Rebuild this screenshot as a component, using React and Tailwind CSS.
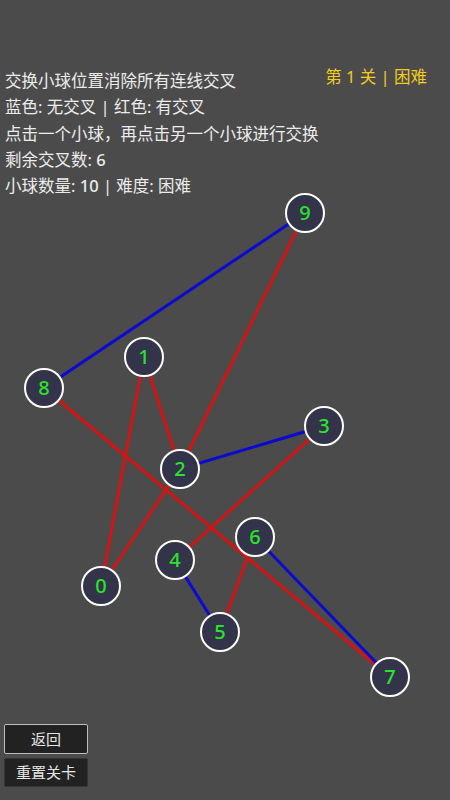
import React from "react";

const NODES = [
  { id: 0, x: 101, y: 586 },
  { id: 1, x: 144, y: 357 },
  { id: 2, x: 180, y: 469 },
  { id: 3, x: 324, y: 426 },
  { id: 4, x: 175, y: 560 },
  { id: 5, x: 220, y: 632 },
  { id: 6, x: 255, y: 537 },
  { id: 7, x: 390, y: 677 },
  { id: 8, x: 44, y: 388 },
  { id: 9, x: 305, y: 213 },
];

// [from, to, crossing]
const EDGES = [
  [9, 8, false],
  [9, 2, true],
  [1, 2, true],
  [1, 0, true],
  [8, 7, true],
  [2, 3, false],
  [2, 0, true],
  [3, 4, true],
  [6, 5, true],
  [6, 7, false],
  [4, 5, false],
];

const font = { fontFamily: '"Noto Sans", "Noto Sans CJK SC", sans-serif' };

export default function App() {
  return (
    <div className="relative w-[450px] h-[800px] bg-[#4b4b4b] overflow-hidden text-[#ececec]" style={font}>
      <div className="pt-[68px] pl-[5px] flex flex-col text-[16.5px] leading-[26.3px]">
        <span>交换小球位置消除所有连线交叉</span>
        <span>蓝色: 无交叉 | 红色: 有交叉</span>
        <span>点击一个小球，再点击另一个小球进行交换</span>
        <span>剩余交叉数: <span className="font-medium">6</span></span>
        <span>小球数量: <span className="font-medium">10</span> | 难度: 困难</span>
      </div>
      <div className="absolute top-[64px] right-[23px] text-[16.5px] leading-[26px] text-[#f2cc1f]">
        第 1 关 | 困难
      </div>

      <svg className="absolute inset-0" width="450" height="800">
        {EDGES.map(([a, b, bad]) => (
          <line
            key={`${a}-${b}`}
            x1={NODES[a].x}
            y1={NODES[a].y}
            x2={NODES[b].x}
            y2={NODES[b].y}
            stroke={bad ? "#d41414" : "#0a0ad2"}
            strokeWidth="3"
          />
        ))}
        {NODES.map((n) => (
          <g key={n.id}>
            <circle cx={n.x} cy={n.y} r="19" fill="#33334a" stroke="#ffffff" strokeWidth="2" />
            <text
              x={n.x}
              y={n.y + 7}
              textAnchor="middle"
              fontSize="20"
              fontWeight="500"
              fill="#2ae32a"
              style={font}
            >
              {n.id}
            </text>
          </g>
        ))}
      </svg>

      <div className="absolute left-[4px] bottom-[13px] flex flex-col gap-[4px] text-[15px]">
        <button className="w-[84px] h-[30px] bg-[#222222] border border-[#bdbdbd] rounded-[2px] text-[#e6e6e6]">
          返回
        </button>
        <button className="w-[84px] h-[29px] bg-[#222222] border border-[#333333] rounded-[2px] text-[#e6e6e6]">
          重置关卡
        </button>
      </div>
    </div>
  );
}
